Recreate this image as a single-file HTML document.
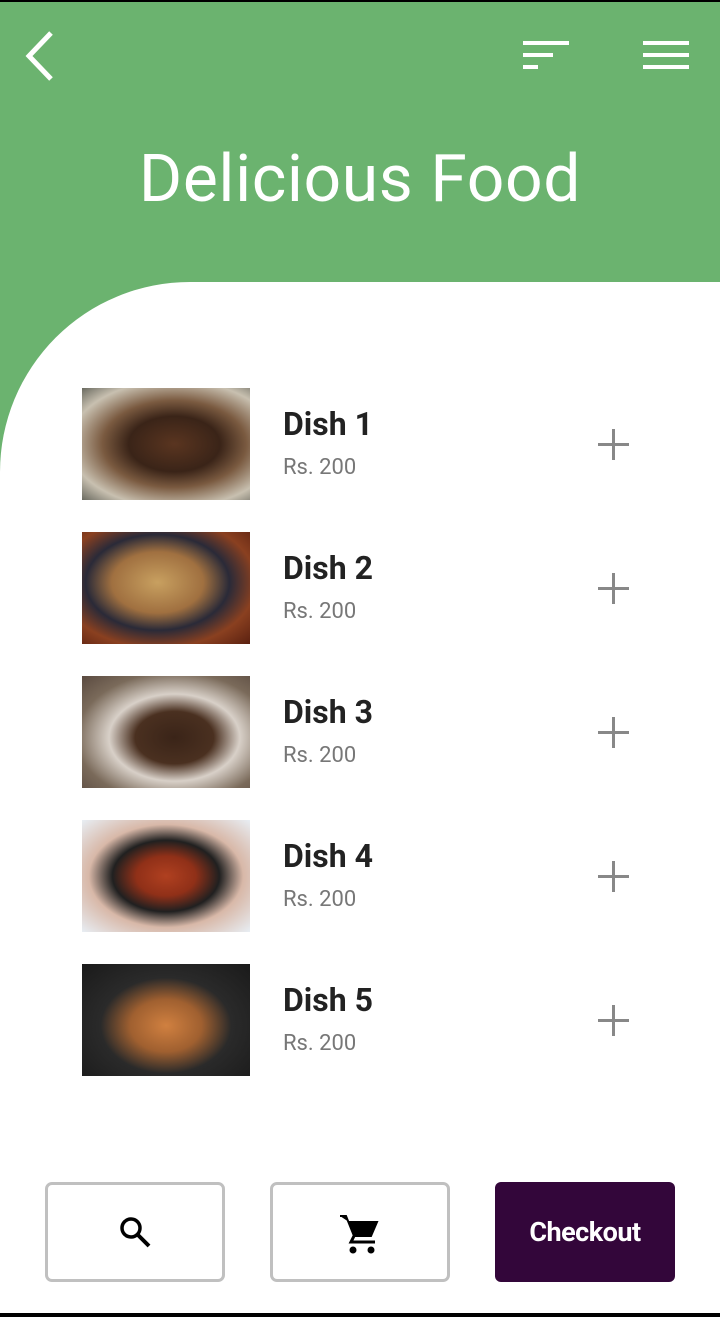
<!DOCTYPE html>
<html><head><meta charset="utf-8"><style>
*{margin:0;padding:0;box-sizing:border-box}
body{width:720px;height:1317px;position:relative;overflow:hidden;background:#fff;font-family:"Roboto","Liberation Sans",sans-serif}
.top{position:absolute;left:0;top:0;width:720px;height:1px;border-top:2px solid #000}
.green{position:absolute;left:0;top:2px;width:720px;height:480px;background:#6bb36f}
.panel{position:absolute;left:0;top:282px;width:720px;height:1040px;background:#fff;border-top-left-radius:190px 190px}
h1{position:absolute;left:0;top:141px;width:720px;text-align:center;color:#fff;font-weight:400;font-size:66px;letter-spacing:0.6px}
.item{position:absolute;left:82px;width:560px;height:112px}
.img{position:absolute;left:0;top:0;width:168px;height:112px}
.name{position:absolute;left:201px;top:17px;font-size:32px;font-weight:bold;color:#222}
.price{position:absolute;left:201px;top:67px;font-size:22px;color:#777}
.plus{position:absolute;left:516px;top:41px;width:31px;height:31px}
.plus:before{content:"";position:absolute;left:14px;top:0;width:3px;height:31px;background:#888}
.plus:after{content:"";position:absolute;left:0;top:14px;width:31px;height:3px;background:#888}
.btn{position:absolute;top:1182px;width:180px;height:100px;border:3px solid #c0c0c0;border-radius:7px;background:#fff}
.co{position:absolute;left:495px;top:1182px;width:180px;height:100px;background:#33063a;border-radius:6px;color:#fff;font-size:27px;font-weight:bold;text-align:center;line-height:100px;letter-spacing:-0.5px}
.bot{position:absolute;left:0;top:1313px;width:720px;height:4px;background:#000}
</style></head><body>
<div class="green"></div>
<div class="panel"></div>
<div class="top"></div>
<svg style="position:absolute;left:20px;top:30px" width="40" height="52"><path d="M31 3 L9 26 L31 49" stroke="#fff" stroke-width="5" fill="none"/></svg>
<svg style="position:absolute;left:520px;top:38px" width="52" height="36"><rect x="3" y="3" width="46" height="4" fill="#fff"/><rect x="3" y="15" width="30" height="4" fill="#fff"/><rect x="3" y="27" width="15" height="4" fill="#fff"/></svg>
<svg style="position:absolute;left:640px;top:38px" width="52" height="36"><rect x="3" y="3" width="46" height="4" fill="#fff"/><rect x="3" y="15" width="46" height="4" fill="#fff"/><rect x="3" y="27" width="46" height="4" fill="#fff"/></svg>
<h1>Delicious Food</h1>

<div class="item" style="top:388px"><div class="img" style="background:radial-gradient(ellipse at 55% 50%,#5a3520 0,#3a2418 35%,#7a5a40 55%,#c8c0b0 80%,#6a6a60 100%)"></div><div class="name">Dish 1</div><div class="price">Rs. 200</div><div class="plus"></div></div>
<div class="item" style="top:532px"><div class="img" style="background:radial-gradient(ellipse at 45% 45%,#c8a060 0,#a07040 35%,#2a2a38 55%,#8a4020 75%,#5a2010 100%)"></div><div class="name">Dish 2</div><div class="price">Rs. 200</div><div class="plus"></div></div>
<div class="item" style="top:676px"><div class="img" style="background:radial-gradient(ellipse at 55% 55%,#3a2418 0,#4a3020 30%,#d8d0c8 50%,#7a6a5a 75%,#5a4a40 100%)"></div><div class="name">Dish 3</div><div class="price">Rs. 200</div><div class="plus"></div></div>
<div class="item" style="top:820px"><div class="img" style="background:radial-gradient(ellipse at 50% 50%,#b04020 0,#903018 25%,#202020 45%,#d8b8a8 65%,#e8eef4 100%)"></div><div class="name">Dish 4</div><div class="price">Rs. 200</div><div class="plus"></div></div>
<div class="item" style="top:964px"><div class="img" style="background:radial-gradient(ellipse at 50% 55%,#d08040 0,#a06030 30%,#2a2a2a 55%,#1a1a1a 100%)"></div><div class="name">Dish 5</div><div class="price">Rs. 200</div><div class="plus"></div></div>

<div class="btn" style="left:45px"><svg style="position:absolute;left:69px;top:29px" width="40" height="40"><circle cx="14" cy="14" r="9" stroke="#000" stroke-width="3.5" fill="none"/><path d="M21 21 L32 32" stroke="#000" stroke-width="4"/></svg></div>
<div class="btn" style="left:270px"><svg style="position:absolute;left:64px;top:27px" width="44" height="44"><path d="M3 4 H9 L17 24 H34 L40 10 H12" fill="#000" stroke="#000" stroke-width="2"/><path d="M14 12 L40 12 L34 24 L18 24 Z" fill="#000"/><path d="M17 24 L14 30 H38" stroke="#000" stroke-width="3" fill="none"/><circle cx="16" cy="38" r="3.5" fill="#000"/><circle cx="34" cy="38" r="3.5" fill="#000"/></svg></div>
<div class="co">Checkout</div>
<div class="bot"></div>
</body></html>
